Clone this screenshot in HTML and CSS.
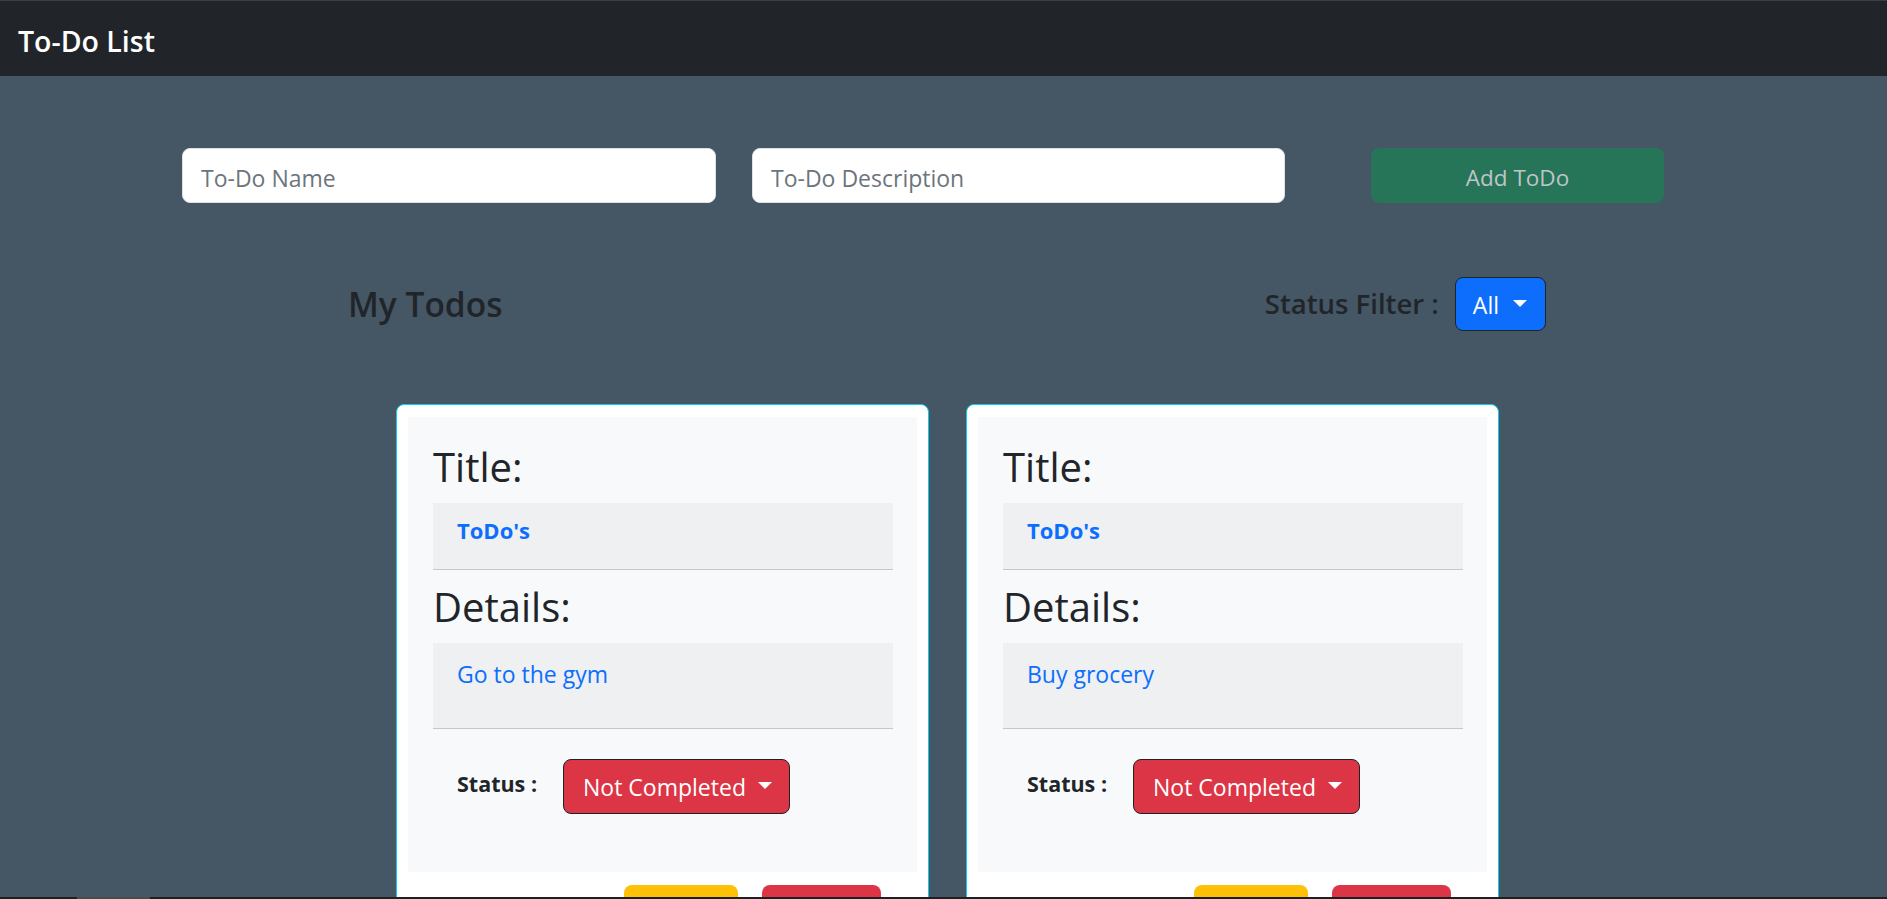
FILE: index.html
```html
<!DOCTYPE html>
<html lang="en">
<head>
<meta charset="utf-8">
<title>To-Do List</title>
<link rel="stylesheet" href="styles.css">
</head>
<body>
<nav class="navbar"><span class="brand">To-Do List</span></nav>
<main class="page">
  <form class="add-row">
    <input class="field field-name" type="text" placeholder="To-Do Name">
    <input class="field field-desc" type="text" placeholder="To-Do Description">
    <button class="btn-add" type="button" disabled>Add ToDo</button>
  </form>

  <div class="list-head">
    <h3 class="list-title">My Todos</h3>
    <div class="filter">
      <span class="filter-label">Status Filter :</span>
      <button class="drop drop-primary" type="button">All</button>
    </div>
  </div>

  <div class="cards">
    <article class="card">
      <div class="card-body">
        <h2 class="label">Title:</h2>
        <div class="value value-title">ToDo's</div>
        <h2 class="label label-details">Details:</h2>
        <div class="value value-details">Go to the gym</div>
        <div class="status-row">
          <span class="status-label">Status :</span>
          <button class="drop drop-danger" type="button">Not Completed</button>
        </div>
      </div>
      <div class="card-actions">
        <button class="act act-edit" type="button" aria-label="Edit"></button>
        <button class="act act-delete" type="button" aria-label="Delete"></button>
      </div>
    </article>
    <article class="card">
      <div class="card-body">
        <h2 class="label">Title:</h2>
        <div class="value value-title">ToDo's</div>
        <h2 class="label label-details">Details:</h2>
        <div class="value value-details">Buy grocery</div>
        <div class="status-row">
          <span class="status-label">Status :</span>
          <button class="drop drop-danger" type="button">Not Completed</button>
        </div>
      </div>
      <div class="card-actions">
        <button class="act act-edit" type="button" aria-label="Edit"></button>
        <button class="act act-delete" type="button" aria-label="Delete"></button>
      </div>
    </article>
  </div>
</main>
<div class="hscroll"><div class="hscroll-thumb"></div></div>
</body>
</html>
```

FILE: styles.css
```css
html, body {
  margin: 0;
  padding: 0;
  overflow: hidden;
}
body {
  background: #455765;
  font-family: "Open Sans", "Noto Sans", sans-serif;
  color: #212529;
  border-top: 1px solid #3b3e42;
}
* { box-sizing: border-box; }

.navbar {
  height: 75px;
  background: #212529;
  padding: 19px 18px 0;
}
.brand {
  display: block;
  color: #fff;
  font-size: 28.5px;
  font-weight: 600;
  line-height: 42px;
}

.page { display: block; }

.add-row {
  display: flex;
  margin: 72px 0 0 182px;
}
.field {
  height: 55px;
  border: 1px solid #dee2e6;
  border-radius: 8px;
  background: #fff;
  padding: 4px 18px 0;
  font-family: inherit;
  font-size: 23px;
  color: #212529;
  outline: none;
}
.field::placeholder { color: #6c757d; }
.field-name { width: 534px; }
.field-desc { width: 533px; margin-left: 36px; }
.btn-add {
  width: 293px;
  height: 55px;
  margin-left: 86px;
  border: none;
  border-radius: 8px;
  background: rgb(38, 117, 89);
  color: rgb(190, 197, 200);
  font-family: inherit;
  font-size: 22.5px;
  padding: 3px 0 0;
}

.list-head {
  display: flex;
  align-items: center;
  justify-content: space-between;
  width: 1198px;
  height: 54px;
  margin: 74px 0 0 348px;
}
.list-title {
  margin: 0;
  font-size: 33.5px;
  font-weight: 600;
  line-height: 40px;
  color: #212529;
}
.filter {
  display: flex;
  align-items: center;
}
.filter-label {
  font-size: 27.5px;
  font-weight: 600;
  line-height: 32px;
  color: #212529;
  margin-right: 16px;
}

.drop {
  display: inline-flex;
  align-items: center;
  height: 55px;
  border: 1px solid #1f2326;
  border-radius: 8px;
  color: #fff;
  font-family: inherit;
  font-size: 23px;
  line-height: 35px;
  white-space: nowrap;
  padding: 2px 18px 0 17px;
  cursor: pointer;
}
.drop::after {
  content: "";
  display: inline-block;
  margin-left: 14px;
  margin-top: -4px;
  border-top: 7px solid #fff;
  border-left: 7px solid transparent;
  border-right: 7px solid transparent;
}
.drop-primary {
  background: #0d6efd;
  height: 54px;
}
.drop-danger {
  background: #dc3545;
  width: 227px;
  font-size: 23px;
  padding-left: 19px;
  padding-right: 0;
}
.drop-danger::after { margin-left: 12px; }

.cards {
  display: flex;
  gap: 37px;
  margin: 73px 0 0 396px;
}
.card {
  width: 533px;
  background: #fff;
  border: 1px solid #0dcaf0;
  border-radius: 8px;
  padding: 12px 11px 11px;
}
.card-body {
  background: #f8f9fa;
  padding: 26px 24px 58px 25px;
}
.label {
  margin: 0 0 12px;
  font-size: 40px;
  font-weight: 500;
  line-height: 48px;
  color: #212529;
}
.label-details { margin-top: 13px; }
.value {
  background: #eff0f2;
  border-bottom: 1px solid #c5c7c9;
  padding-left: 24px;
  color: #0d6efd;
}
.value-title {
  height: 67px;
  padding-top: 12px;
  font-size: 22px;
  font-weight: 700;
  line-height: 30px;
}
.value-details {
  height: 86px;
  padding-top: 16px;
  font-size: 23px;
  line-height: 30px;
}
.status-row {
  display: flex;
  align-items: flex-start;
  margin-top: 30px;
  padding-left: 24px;
}
.status-label {
  font-size: 21.5px;
  font-weight: 700;
  line-height: 30px;
  margin-top: 10px;
  margin-right: 26px;
  color: #212529;
}

.card-actions {
  display: flex;
  justify-content: flex-end;
  gap: 24px;
  padding: 13px 36px 0 0;
}
.act {
  height: 52px;
  border: none;
  border-radius: 8px;
}
.act-edit { width: 114px; background: #ffc107; }
.act-delete { width: 119px; background: #dc3545; }

.hscroll {
  position: fixed;
  left: 0;
  right: 0;
  bottom: 0;
  height: 2px;
  background: #1e1f21;
}
.hscroll-thumb {
  margin-left: 77px;
  width: 73px;
  height: 2px;
  background: #4a4b4d;
}
```
